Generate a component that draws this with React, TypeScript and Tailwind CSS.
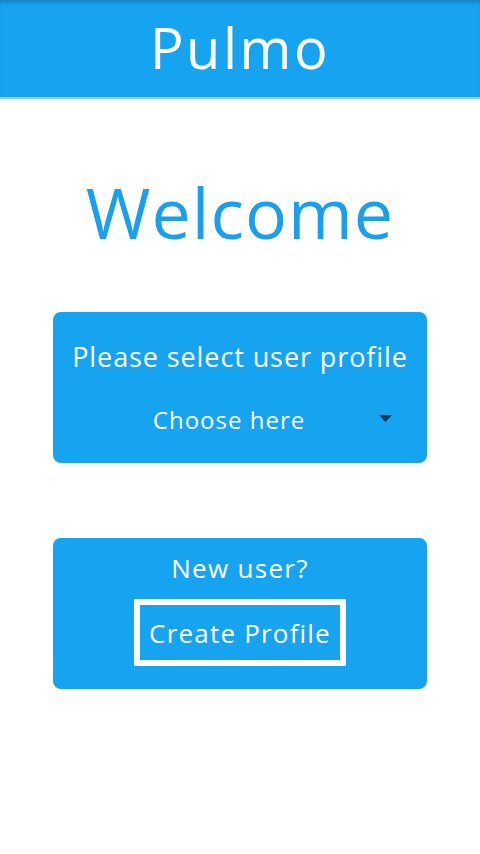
import React from 'react';

const App: React.FC = () => {
  return (
    <div className="min-h-screen w-full bg-white font-['Open_Sans',sans-serif] text-white">
      {/* header */}
      <header className="h-[99px] bg-[#16a3ef] border-b-2 border-[#8fd3f7] flex items-center justify-center shadow-[inset_0_4px_4px_-2px_rgba(0,0,0,0.25)]">
        <h1 className="text-[56px] leading-none font-normal tracking-[2.5px] pb-1">Pulmo</h1>
      </header>

      <main className="flex flex-col items-center">
        <h2 className="mt-[78px] text-[70px] leading-none text-[#1a9fe8] tracking-[1px]">Welcome</h2>

        {/* select profile */}
        <section className="mt-[65px] w-[374px] h-[151px] rounded-lg bg-[#16a3ef] flex flex-col items-center pt-[29px]">
          <p className="text-[27px] leading-[32px] tracking-[0.9px]">Please select user profile</p>
          <div className="relative w-full mt-[32px] flex justify-center">
            <span className="text-[24px] leading-[30px] tracking-[1px] pr-[22px]">Choose here</span>
            <svg className="absolute right-[35px] top-[10px]" width="13" height="7" viewBox="0 0 13 7">
              <path d="M0 0 H13 L6.5 7 Z" fill="#17395a" />
            </svg>
          </div>
        </section>

        {/* new user */}
        <section className="mt-[75px] w-[374px] h-[151px] rounded-lg bg-[#16a3ef] flex flex-col items-center pt-[14px]">
          <p className="text-[26px] leading-[32px] tracking-[1.3px]">New user?</p>
          <button className="mt-[15px] w-[212px] h-[67px] border-[6px] border-white text-[26px] leading-none tracking-[1.2px] text-white flex items-center justify-center">
            Create Profile
          </button>
        </section>
      </main>
    </div>
  );
};

export default App;
